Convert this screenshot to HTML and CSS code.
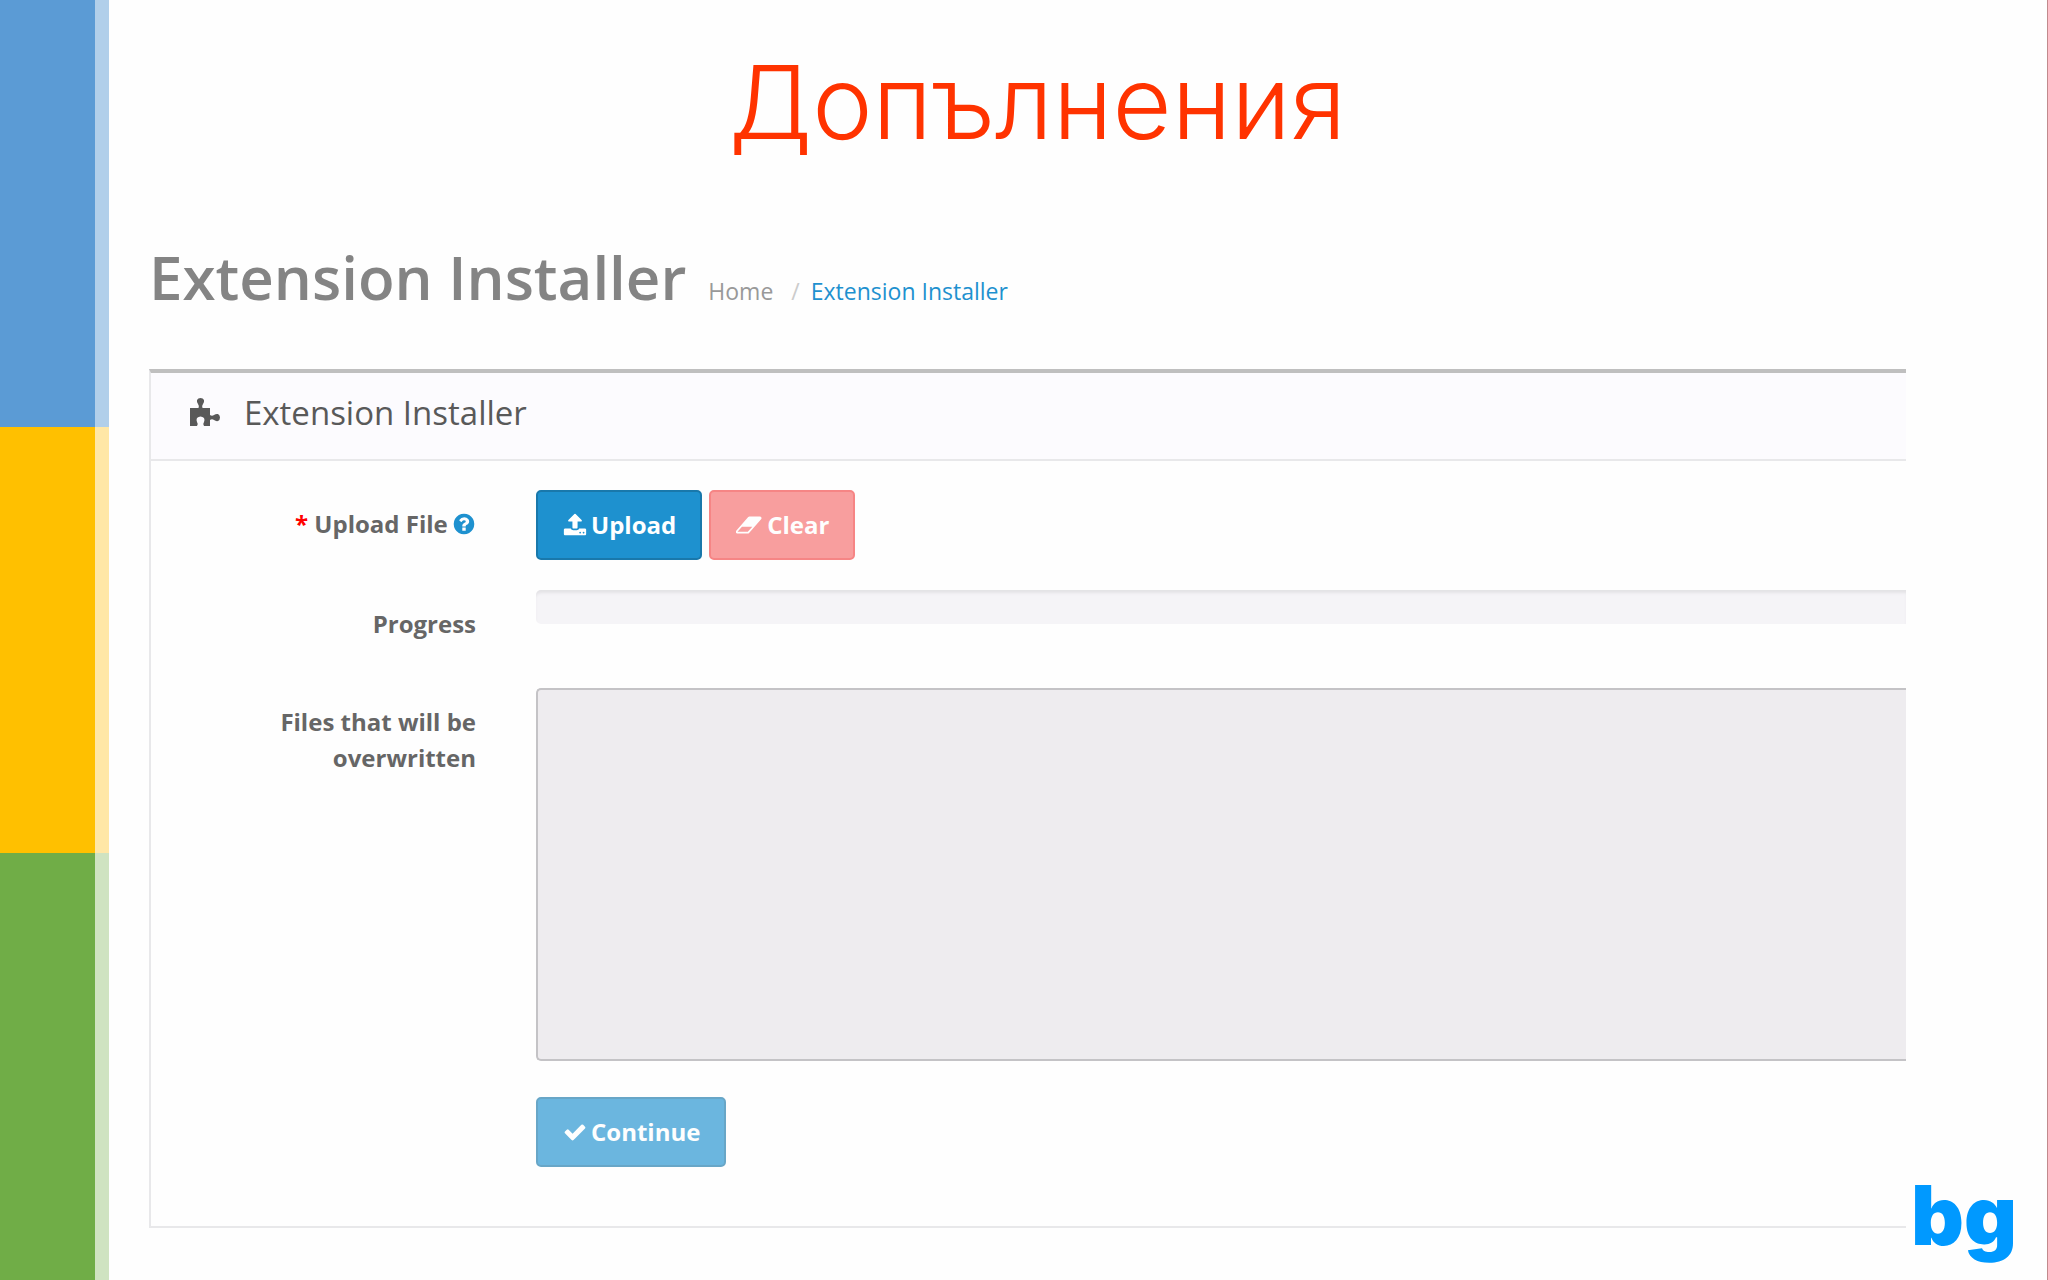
FILE: index.html
```html
<!DOCTYPE html>
<html lang="bg">
<head>
  <meta charset="UTF-8" />
  <meta name="viewport" content="width=device-width, initial-scale=1.0"/>
  <title>Допълнения</title>
  <link rel="stylesheet" href="styles.css">
</head>
<body>
  <div class="stripes">
    <div class="stripe blue"></div>
    <div class="stripe yellow"></div>
    <div class="stripe green"></div>
  </div>

  <main>
    <h1 class="slide-title">Допълнения</h1>

    <header class="page-header">
      <h2>Extension Installer</h2>
      <nav class="breadcrumb">
        <a href="#" class="home">Home</a>
        <span class="sep">/</span>
        <a href="#">Extension Installer</a>
      </nav>
    </header>

    <section class="panel">
      <div class="panel-heading">
        <svg class="puzzle" viewBox="0 0 30 30" aria-hidden="true">
          <path d="M0 11H8.500Q9.500 9 8 7Q6.500 5 7 3Q8 1 10.500 1T14 3Q14.500 5 13 7Q11.500 9 12.500 11H20V18Q22 19.500 24 18Q26 16.500 28 17Q30 18 30 20.500T28 24Q26 24.500 24 23Q22 21.500 20 23V29H14Q12.500 27 14 25Q15 23 14 21Q12.500 19.500 10.500 19.500T7 21Q6 23 7 25Q8.500 27 7 29H0Z"/>
        </svg>
        <h3>Extension Installer</h3>
      </div>

      <form class="panel-body">
        <label for="upload"><span class="required">*</span> Upload File
          <svg class="icon help" viewBox="0 0 1792 1792" aria-hidden="true"><path d="M1024 1376v-192q0-14-9-23t-23-9h-192q-14 0-23 9t-9 23v192q0 14 9 23t23 9h192q14 0 23-9t9-23zm256-672q0-88-55.500-163t-138.500-116-170-41q-243 0-371 213-15 24 8 42l132 100q7 6 19 6 16 0 25-12 53-68 86-92 34-24 86-24 48 0 85.500 26t37.500 59q0 38-20 61t-68 45q-63 28-115.500 86.500t-52.500 125.500v36q0 14 9 23t23 9h192q14 0 23-9t9-23q0-19 21.500-49.500t54.500-49.500q32-18 49-28.500t46-35 44.500-48 28-60.500 12.500-81zm384 192q0 209-103 385.500t-279.500 279.500-385.500 103-385.500-103-279.500-279.500-103-385.500 103-385.500 279.500-279.500 385.500-103 385.500 103 279.500 279.500 103 385.500z"/></svg>
        </label>
        <div class="buttons">
          <button type="button" id="upload" class="btn primary">
            <svg class="icon" viewBox="0 0 1792 1792" aria-hidden="true"><path d="M1344 1472q0-26-19-45t-45-19-45 19-19 45 19 45 45 19 45-19 19-45zm256 0q0-26-19-45t-45-19-45 19-19 45 19 45 45 19 45-19 19-45zm128-224v320q0 40-28 68t-68 28h-1472q-40 0-68-28t-28-68v-320q0-40 28-68t68-28h427q21 56 70.500 92t110.500 36h256q61 0 110.500-36t70.500-92h427q40 0 68 28t28 68zm-325-648q-17 40-59 40h-256v448q0 26-19 45t-45 19h-256q-26 0-45-19t-19-45v-448h-256q-42 0-59-40-17-39 14-69l448-448q18-19 45-19t45 19l448 448q31 30 14 69z"/></svg>
            Upload
          </button>
          <button type="button" class="btn danger" disabled>
            <svg class="icon wide" viewBox="0 0 1920 1792" aria-hidden="true"><path d="M832 1408l336-384h-768l-336 384h768zm1013-1077q15 34 9.500 71.500t-30.500 65.500l-896 1024q-38 44-96 44h-768q-38 0-69.500-20.500t-47.500-54.500q-15-34-9.500-71.500t30.500-65.500l896-1024q38-44 96-44h768q38 0 69.500 20.500t47.500 54.500z"/></svg>
            Clear
          </button>
        </div>

        <span class="label" id="progressLabel">Progress</span>
        <div class="progress" role="progressbar" aria-labelledby="progressLabel"></div>

        <label for="overwrite">Files that will be overwritten</label>
        <textarea id="overwrite" readonly></textarea>

        <div class="buttons continue">
          <button type="button" class="btn primary" disabled>
            <svg class="icon" viewBox="0 0 1792 1792" aria-hidden="true"><path d="M1671 566q0 40-28 68l-724 724-136 136q-28 28-68 28t-68-28l-136-136-362-362q-28-28-28-68t28-68l136-136q28-28 68-28t68 28l294 295 656-657q28-28 68-28t68 28l136 136q28 28 28 68z"/></svg>
            Continue
          </button>
        </div>
      </form>
    </section>
  </main>

  <div class="logo">bg</div>
</body>
</html>
```

FILE: styles.css
```css
:root {
  --blue: #1e91cf;
  --text: #666;
  --line: #e8e8ea;
}

* {
  box-sizing: border-box;
}

body {
  margin: 0;
  min-height: 100vh;
  display: flex;
  position: relative;
  background: #fefefe;
  border-right: 1px solid #c08a8c;
  font-family: "Open Sans", sans-serif;
  font-size: 23px;
  color: var(--text);
}

h1, h2, h3 {
  margin: 0;
}

a {
  text-decoration: none;
  color: var(--blue);
}

.stripes {
  width: 109px;
  display: flex;
  flex-direction: column;
}

.stripe {
  flex: 1;
  border-right: 14px solid;
}

.blue {
  background: #5b9bd5;
  border-color: #b1cfea;
}

.yellow {
  background: #ffc000;
  border-color: #ffe7a6;
}

.green {
  background: #70ad47;
  border-color: #cfe3c1;
}

main {
  flex: 1;
  padding: 32px 141px 52px 40px;
}

.slide-title {
  margin-right: -20px;
  text-align: center;
  font-family: Inter, sans-serif;
  font-size: 102px;
  font-weight: 300;
  line-height: 140px;
  color: #ff3300;
}

.page-header {
  display: flex;
  align-items: baseline;
  gap: 22px;
  height: 197px;
  padding-top: 65px;
}

.page-header h2 {
  font-size: 60px;
  font-weight: 600;
  line-height: 80px;
  color: #848484;
}

.breadcrumb a, .sep {
  line-height: 32px;
}

.breadcrumb .home {
  color: #999;
}

.sep {
  padding: 0 5px 0 12px;
  color: #ccc;
}

.panel {
  border: 2px solid var(--line);
  border-top: 4px solid #bfbfbf;
  border-right: none;
}

.panel-heading {
  display: flex;
  align-items: center;
  gap: 24px;
  height: 88px;
  padding: 0 39px 8px;
  background: #fcfbfe;
  border-bottom: 2px solid var(--line);
}

.panel-heading h3 {
  font-size: 33px;
  font-weight: 500;
  color: #595959;
}

.puzzle {
  width: 30px;
  height: 30px;
  fill: #595959;
}

.panel-body {
  display: grid;
  grid-template-columns: 325px 1fr;
  column-gap: 60px;
  padding: 29px 0 59px;
}

label, .label {
  padding: 16px 0 0 112px;
  font-size: 24px;
  font-weight: 700;
  line-height: 36px;
  text-align: right;
}

.required {
  color: #f00;
}

.icon {
  width: 24px;
  height: 24px;
  fill: currentColor;
  vertical-align: -3px;
}

.icon.wide {
  width: 27px;
}

.help {
  margin-left: -2px;
  fill: var(--blue);
}

.buttons {
  display: flex;
  gap: 7px;
  height: 70px;
  margin-bottom: 30px;
}

.btn {
  display: flex;
  align-items: center;
  gap: 4px;
  padding: 0 24px 1px 25px;
  font: inherit;
  font-size: 24px;
  font-weight: 700;
  color: #fff;
  border: 2px solid;
  border-radius: 5px;
}

.btn:disabled {
  opacity: 0.65;
}

.primary {
  background: var(--blue);
  border-color: #1978ab;
}

.danger {
  background: #f56b6b;
  border-color: #f24545;
}

.progress {
  height: 34px;
  margin-bottom: 64px;
  background: #f5f4f7;
  border-radius: 5px 0 0 5px;
  box-shadow: inset 0 4px 3px -1px #e4e3e6;
}

textarea {
  height: 373px;
  resize: none;
  background: #eeecef;
  border: 2px solid #c4c3c6;
  border-right: none;
  border-radius: 5px 0 0 5px;
  outline: none;
}

.continue {
  grid-column: 2;
  margin: 36px 0 0;
}

/* sits in the corner over the page */
.logo {
  position: absolute;
  right: 30px;
  bottom: 16px;
  font-family: Inter, sans-serif;
  font-size: 82px;
  font-weight: 900;
  line-height: 96px;
  color: #0099ff;
}
```
